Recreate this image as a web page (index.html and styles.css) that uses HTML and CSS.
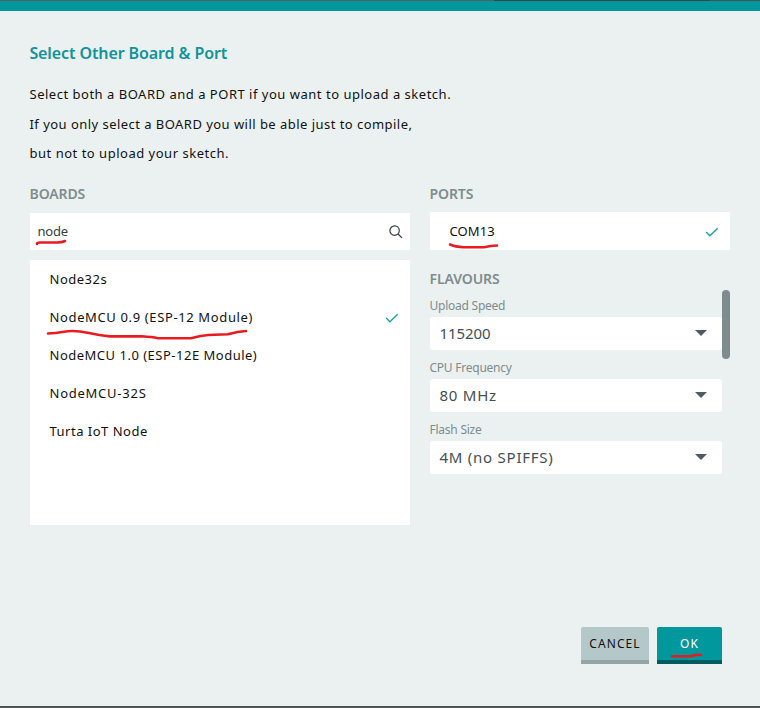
FILE: index.html
```html
<!DOCTYPE html>
<html lang="en">
<head>
<meta charset="utf-8">
<title>Select Other Board &amp; Port</title>
<link rel="stylesheet" href="styles.css">
</head>
<body>
<main class="dialog">
  <h1 class="title"><span>Select Other Board &amp; Port</span></h1>
  <div class="intro">
    <p class="intro-a">Select both a BOARD and a PORT if you want to upload a sketch.</p>
    <p class="intro-b">If you only select a BOARD you will be able just to compile,</p>
    <p class="intro-c">but not to upload your sketch.</p>
  </div>
  <div class="columns">
    <section class="boards">
      <h2 class="heading">BOARDS</h2>
      <div class="search">
        <span class="query">node</span>
        <svg class="magnifier" width="14" height="14" viewBox="0 0 14 14"><circle cx="5.6" cy="5.6" r="4.7"/><path d="M9 9l4 3.9"/></svg>
        <svg class="mark mark-query" width="34" height="8" viewBox="0 0 34 8"><path d="M2 6Q2 4.500 5 4.500L22 4.500Q27 4.500 30 3"/></svg>
      </div>
      <ul class="list">
        <li class="item"><span class="n1">Node32s</span></li>
        <li class="item"><span class="n2">NodeMCU 0.9 (ESP-12 Module)</span>
          <svg class="check" width="14" height="10" viewBox="0 0 14 10"><path d="M1.200 5l3.700 3.700L12.700 1.200"/></svg>
          <svg class="mark mark-board" width="206" height="14" viewBox="0 0 206 14"><path d="M3 5.500Q10 5.500 19 3.700Q29 1.800 44 5Q55 7.500 65 8.400L97 8.300Q107 9 113 10.200L146 10.300Q157 7.500 163 7L183 6.300Q193 3.500 201 3"/></svg>
        </li>
        <li class="item"><span class="n3">NodeMCU 1.0 (ESP-12E Module)</span></li>
        <li class="item"><span class="n4">NodeMCU-32S</span></li>
        <li class="item"><span class="n5">Turta IoT Node</span></li>
      </ul>
    </section>
    <section class="ports">
      <h2 class="heading heading-ports">PORTS</h2>
      <div class="port"><span class="com">COM13</span>
        <svg class="check" width="14" height="10" viewBox="0 0 14 10"><path d="M1.200 5l3.700 3.700L12.700 1.200"/></svg>
        <svg class="mark mark-port" width="54" height="8" viewBox="0 0 54 8"><path d="M3 2.500Q8 4.900 17 5.200L37 5.200Q44 3.700 50 3.500"/></svg>
      </div>
      <h2 class="heading heading-flavours">FLAVOURS</h2>
      <div class="flavours">
        <div class="fields">
          <label class="label l1">Upload Speed</label>
          <div class="select"><span class="v1">115200</span><i class="arrow"></i></div>
          <label class="label l2">CPU Frequency</label>
          <div class="select"><span class="v2">80 MHz</span><i class="arrow"></i></div>
          <label class="label l3">Flash Size</label>
          <div class="select"><span class="v3">4M (no SPIFFS)</span><i class="arrow"></i></div>
        </div>
        <div class="scrollbar"></div>
      </div>
    </section>
  </div>
  <footer class="actions">
    <button class="button cancel"><span>CANCEL</span></button>
    <button class="button ok"><span>OK</span>
      <svg class="mark mark-ok" width="35" height="7" viewBox="0 0 35 7"><path d="M3 4.200L22 4.200Q27 2.800 32 2.800"/></svg>
    </button>
  </footer>
</main>
</body>
</html>
```
FILE: styles.css
```css
* { box-sizing: border-box; }
body { margin: 0; background: #ebf1f1; color: #111; font: 13px/20px "Noto Sans", sans-serif; }
h1, h2, p, ul { margin: 0; padding: 0; }
ul { list-style: none; }
svg { display: block; fill: none; }
.dialog {
  width: 760px; height: 708px; padding: 31px 30px 0;
  border-top: 11px solid #00979d; border-bottom: 2px solid #4e5354;
  background: #ebf1f1;
  position: relative;
}
.dialog::before { content: ""; position: absolute; left: 0; right: 0; top: -11px; height: 1px; background: linear-gradient(90deg, #575d60 0 494px, #39474a 494px 710px, #4b5357 710px); }
.title { height: 22px; margin-left: -0.6px; font-size: 16px; line-height: 22px; font-weight: 600; color: #129398; white-space: nowrap; letter-spacing: -0.1px; }
.intro { padding-top: 16px; margin-left: -0.5px; white-space: nowrap; letter-spacing: 0.51px; }
.intro p { height: 30px; line-height: 29px; }
.intro .intro-b { letter-spacing: 0.46px; }
.intro-c { margin-top: -1px; }
.columns { display: flex; gap: 20px; margin-top: 13px; height: 343px; }
.boards { width: 380px; }
.ports { width: 300px; }
.heading { height: 31px; margin-left: -0.5px; font-size: 14px; line-height: 23px; font-weight: 600; color: #7f8c8d; white-space: nowrap; letter-spacing: -0.1px; }
.search { position: relative; display: flex; align-items: center; justify-content: space-between; height: 37px; padding: 0 7px 0 7.5px; background: #fff; color: #343f43; }
.query { letter-spacing: -0.2px; margin-top: -2px; }
.magnifier { stroke: #343f43; stroke-width: 1.200; }
.list { height: 265px; margin-top: 10px; background: #fff; }
.item, .port { position: relative; display: flex; align-items: center; justify-content: space-between; height: 38px; padding: 0 11px 0 19.5px; white-space: nowrap; }
.item { letter-spacing: 0.5px; }
.n2 { letter-spacing: 0.63px; }
.n4 { letter-spacing: 0.75px; }
.port { background: #fff; }
.com { letter-spacing: 0.1px; }
.check { stroke: #1da1a6; stroke-width: 1.400; }
.item .check, .port .check { margin-top: 2px; }
.heading-ports { height: 30px; }
.heading-flavours { margin-top: 17px; height: 23px; }
.flavours { display: flex; height: 184px; }
.fields { width: 292px; }
.label { display: block; height: 27px; margin-left: -0.5px; padding-top: 6px; font-size: 12px; line-height: 20px; color: #7f8c8d; white-space: nowrap; letter-spacing: -0.24px; }
.label ~ .label { height: 29px; padding-top: 8px; }
.select { display: flex; align-items: center; justify-content: space-between; height: 33px; padding: 0 15px 0 9.5px; border-radius: 3px; background: #fff; color: #434f54; font-size: 15px; white-space: nowrap; letter-spacing: 0.75px; }
.select span { margin-top: -2px; }
.select .v1 { letter-spacing: -0.1px; }
.arrow { border: 6px solid transparent; border-top-color: #4e5b61; border-bottom: 0; margin-top: -1px; }
.scrollbar { width: 8px; height: 69px; border-radius: 4px; background: #7f8c8d; }
.actions { display: flex; justify-content: flex-end; gap: 8px; margin: 102px 8px 0 0; }
.button { position: relative; height: 37px; padding: 0; border: 0; border-bottom: 4px solid; border-radius: 2px 2px 0 0; font: 12px/29px "Noto Sans", sans-serif; letter-spacing: 1.1px; }
.cancel { width: 68px; background: #b5c8c9; border-color: #95a5a6; color: #111; }
.ok { width: 65px; background: #00979d; border-color: #005c5f; color: #fff; }
.mark { position: absolute; stroke: #e81c20; stroke-width: 2.600; stroke-linecap: round; stroke-linejoin: round; }
.mark-query { left: 5px; top: 25px; }
.mark-board { left: 15px; top: 30px; }
.mark-port { left: 17px; top: 30px; }
.mark-ok { left: 12px; top: 25px; }
```
